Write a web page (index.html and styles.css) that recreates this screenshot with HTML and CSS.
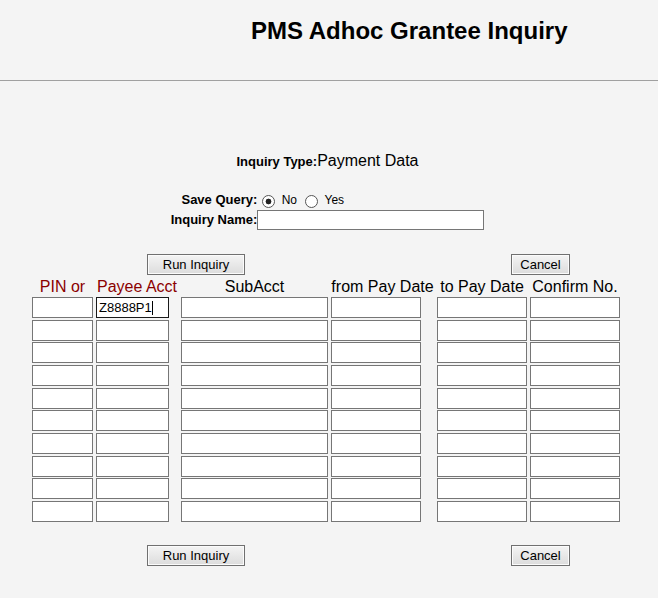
FILE: index.html
```html
<!DOCTYPE html>
<html lang="en">
<head>
    <meta charset="UTF-8">
    <meta name="viewport" content="width=device-width, initial-scale=1.0">
    <title>PMS Adhoc Grantee Inquiry</title>
    <link rel="stylesheet" href="styles.css">
</head>
<body>
    <div class="page-header">
        <h1 class="page-title">PMS Adhoc Grantee Inquiry</h1>
    </div>
    <hr class="header-rule">

    <div class="inquiry-type"><b>Inquiry Type:</b>Payment Data</div>

    <!-- Сохранение запроса -->
    <div class="query-form">
        <label class="form-label">Save Query:</label>
        <div class="form-value radio-group">
            <input type="radio" name="saveQuery" checked> No <input type="radio" name="saveQuery"> Yes
        </div>
        <label class="form-label" for="inquiryName">Inquiry Name:</label>
        <div class="form-value"><input type="text" id="inquiryName" class="name-input"></div>
    </div>

    <div class="button-row">
        <button class="btn btn-run">Run Inquiry</button>
        <button class="btn btn-cancel">Cancel</button>
    </div>

    <!-- Критерии поиска -->
    <div class="criteria-head">
        <div class="head-cell accent">PIN or</div>
        <div class="head-cell accent">Payee Acct</div>
        <div class="head-cell">SubAcct</div>
        <div class="head-cell">from Pay Date</div>
        <div class="head-cell">to Pay Date</div>
        <div class="head-cell">Confirm No.</div>
    </div>
    <div class="criteria-grid" id="criteriaGrid">
        <input type="text" class="f-pin">
        <div class="acct-wrap">
            <input type="text" class="f-acct focused" value="Z8888P1">
            <span class="caret"></span>
        </div>
        <input type="text" class="f-sub">
        <input type="text" class="f-from">
        <input type="text" class="f-to">
        <input type="text" class="f-conf">

        <input type="text" class="f-pin"><input type="text" class="f-acct"><input type="text" class="f-sub"><input type="text" class="f-from"><input type="text" class="f-to"><input type="text" class="f-conf">
        <input type="text" class="f-pin"><input type="text" class="f-acct"><input type="text" class="f-sub"><input type="text" class="f-from"><input type="text" class="f-to"><input type="text" class="f-conf">
        <input type="text" class="f-pin"><input type="text" class="f-acct"><input type="text" class="f-sub"><input type="text" class="f-from"><input type="text" class="f-to"><input type="text" class="f-conf">
        <input type="text" class="f-pin"><input type="text" class="f-acct"><input type="text" class="f-sub"><input type="text" class="f-from"><input type="text" class="f-to"><input type="text" class="f-conf">
        <input type="text" class="f-pin"><input type="text" class="f-acct"><input type="text" class="f-sub"><input type="text" class="f-from"><input type="text" class="f-to"><input type="text" class="f-conf">
        <input type="text" class="f-pin"><input type="text" class="f-acct"><input type="text" class="f-sub"><input type="text" class="f-from"><input type="text" class="f-to"><input type="text" class="f-conf">
        <input type="text" class="f-pin"><input type="text" class="f-acct"><input type="text" class="f-sub"><input type="text" class="f-from"><input type="text" class="f-to"><input type="text" class="f-conf">
        <input type="text" class="f-pin"><input type="text" class="f-acct"><input type="text" class="f-sub"><input type="text" class="f-from"><input type="text" class="f-to"><input type="text" class="f-conf">
        <input type="text" class="f-pin"><input type="text" class="f-acct"><input type="text" class="f-sub"><input type="text" class="f-from"><input type="text" class="f-to"><input type="text" class="f-conf">
    </div>

    <div class="button-row bottom">
        <button class="btn btn-run">Run Inquiry</button>
        <button class="btn btn-cancel">Cancel</button>
    </div>
</body>
</html>
```

FILE: styles.css
```css
* {
    box-sizing: border-box;
    font-family: 'Liberation Sans', Arial, Helvetica, sans-serif;
}
body {
    margin: 0;
    background-color: #f4f4f4;
    color: #000;
}

/* Шапка */
.page-header {
    height: 80px;
    padding: 17px 0 0 251px;
}
.page-title {
    margin: 0;
    font-size: 24px;
    line-height: 28px;
    font-weight: bold;
}
.header-rule {
    margin: 0;
    height: 0;
    border: none;
    border-top: 1px solid #a0a0a0;
}

.inquiry-type {
    margin: 70px 0 0 -3px;
    text-align: center;
    font-size: 16px;
    line-height: 19px;
}
.inquiry-type b {
    font-size: 13px;
}

/* Форма сохранения */
.query-form {
    margin: 19px 0 0 -3px;
    display: grid;
    grid-template-columns: auto auto;
    justify-content: center;
}
.form-label {
    text-align: right;
    font-weight: bold;
    font-size: 13px;
    line-height: 20px;
}
.form-value {
    height: 20px;
}
.radio-group {
    font-size: 12px;
    line-height: 20px;
}
.radio-group input[type="radio"] {
    appearance: none;
    width: 13px;
    height: 13px;
    margin: 0 3px 0 5px;
    vertical-align: -4px;
    border: 1px solid #555;
    border-radius: 50%;
    background: #fff;
}
.radio-group input[type="radio"]:checked {
    background: radial-gradient(circle, #222 0, #222 2.6px, #fff 3.2px);
}
.name-input {
    width: 227px;
    height: 20px;
}

input[type="text"] {
    margin: 0;
    padding: 1px 2px;
    border: 1px solid #767676;
    background: #fff;
    font-size: 13px;
    outline: none;
}

/* Кнопки */
.button-row {
    margin-top: 24px;
    display: flex;
    padding-left: 147px;
    gap: 266px;
}
.button-row.bottom {
    margin-top: 23px;
}
.btn {
    height: 21px;
    padding: 0;
    border: 1px solid #707070;
    background: linear-gradient(#f4f4f4, #dcdcdc);
    box-shadow: inset 0 0 0 1px #fbfbfb;
    font-size: 13px;
    color: #000;
}
.btn-run {
    width: 98px;
}
.btn-cancel {
    width: 59px;
}

/* Таблица критериев */
.criteria-head,
.criteria-grid {
    display: grid;
    grid-template-columns: 61px 82px 147px 103px 90px 90px;
    column-gap: 3px;
    margin-left: 32px;
}
.criteria-head {
    margin-top: 3px;
}
.head-cell {
    text-align: center;
    white-space: nowrap;
    font-size: 16px;
    line-height: 18px;
}
.head-cell.accent {
    color: #8b0000;
}
.criteria-grid {
    margin-top: 1px;
    row-gap: 1.67px;
}
.criteria-grid input[type="text"] {
    height: 21px;
    width: 100%;
}
.criteria-grid input.f-acct {
    width: 73px;
}
.criteria-grid input.f-from {
    width: 90px;
}
.criteria-grid input.focused {
    border-color: #1a1a1a;
}
.acct-wrap {
    position: relative;
}
.caret {
    position: absolute;
    left: 56px;
    top: 4px;
    width: 1px;
    height: 14px;
    background: #000;
}
```
